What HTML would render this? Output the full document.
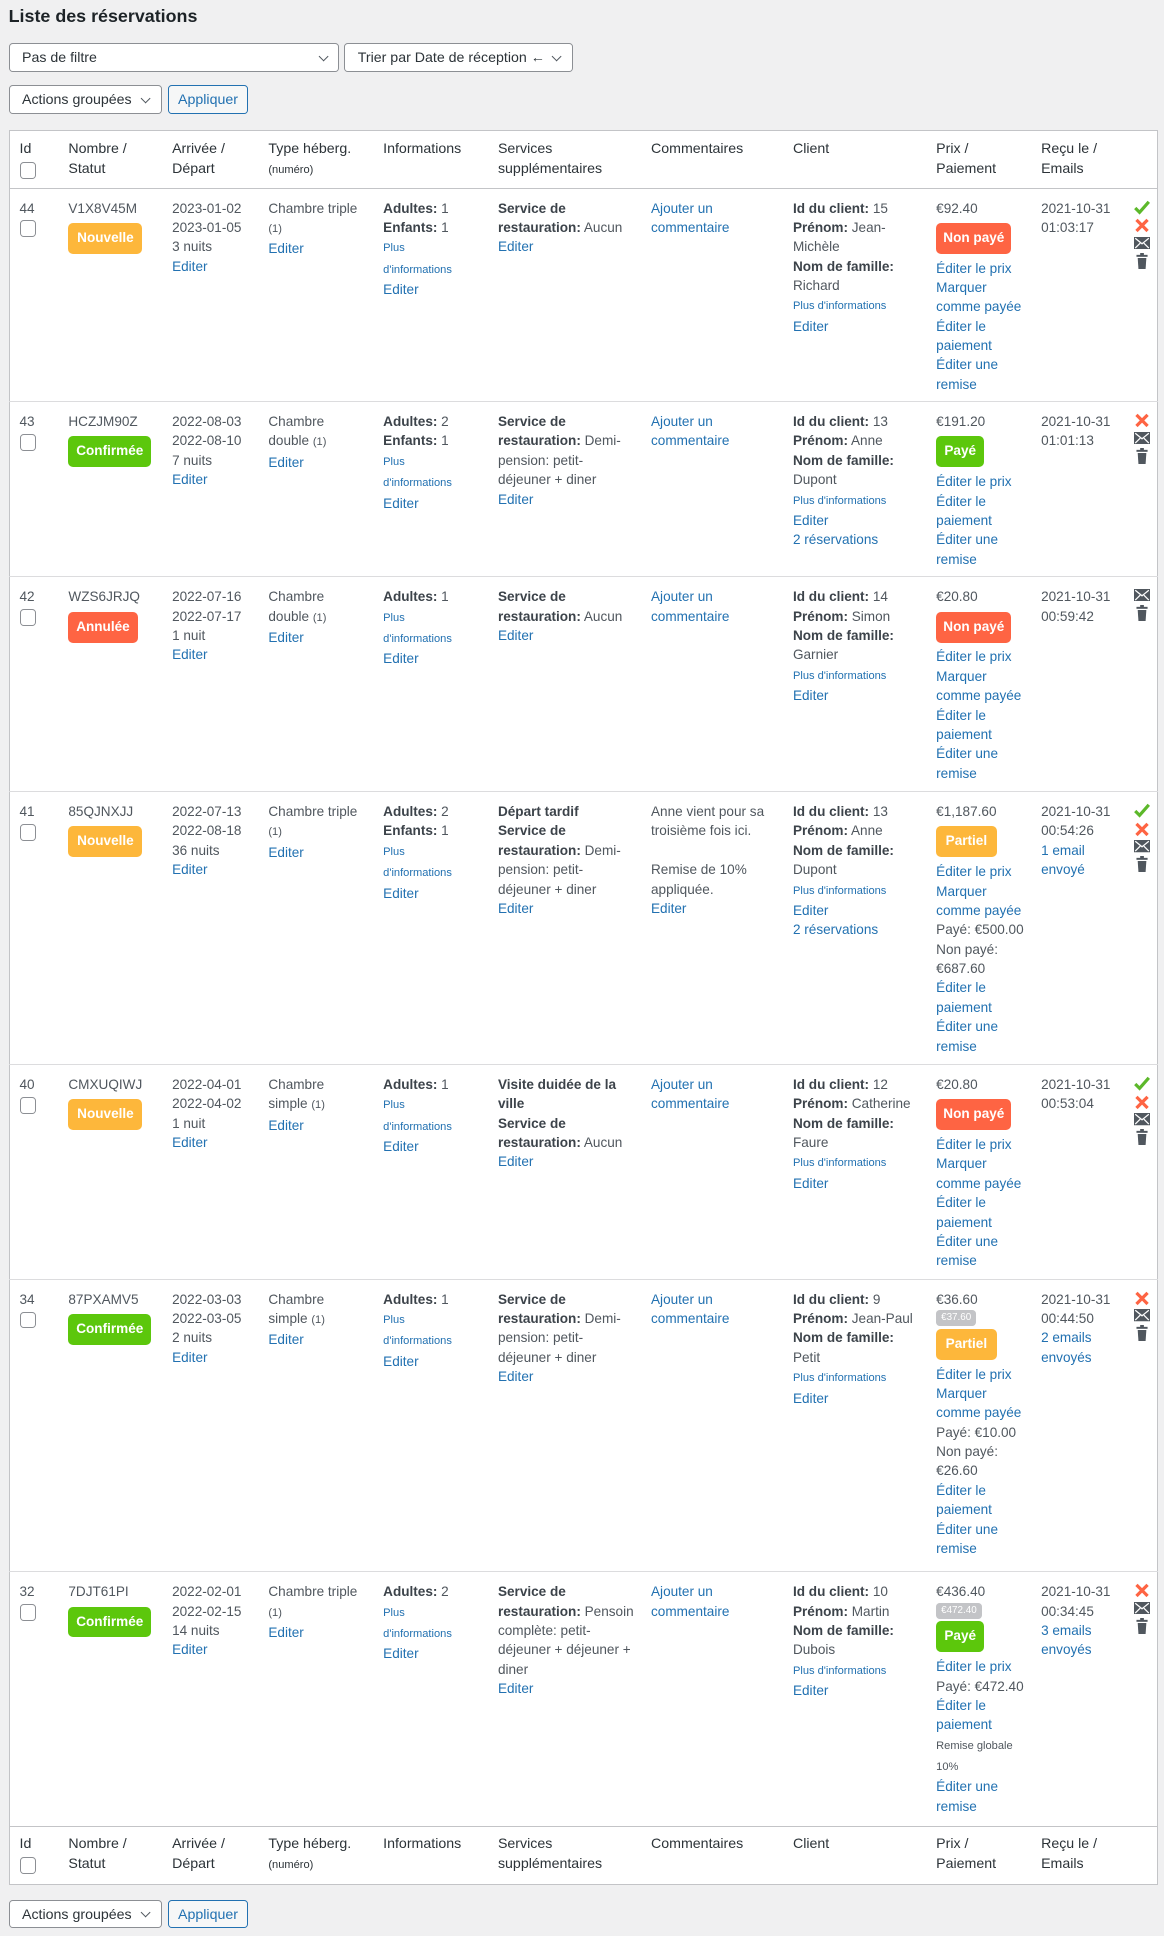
<!DOCTYPE html>
<html><head><meta charset="utf-8">
<style>
html,body{margin:0;padding:0;background:#f0f0f1;}
body{width:1164px;height:1936px;overflow:hidden;}
#w{zoom:1.2344;width:943px;position:relative;font-family:"Liberation Sans",sans-serif;color:#50575e;font-size:11px;}
h1{position:absolute;left:7px;top:5px;margin:0;font-size:14.5px;font-weight:bold;color:#1d2327;}
.sel{position:absolute;height:23px;border:1px solid #8c8f94;border-radius:3px;background:#fff;box-sizing:border-box;font-size:11.5px;color:#2c3338;line-height:23px;padding-left:10px;}
.sel:after{content:"";position:absolute;right:9px;top:7px;width:5px;height:5px;border-right:1.3px solid #50575e;border-bottom:1.3px solid #50575e;transform:rotate(45deg);}
.btn{position:absolute;height:23px;border:1px solid #2271b1;border-radius:3px;background:#f6f7f7;box-sizing:border-box;color:#2271b1;font-size:11.5px;line-height:23px;text-align:center;}
table{position:absolute;left:7px;top:105px;width:930px;border-collapse:collapse;background:#fff;border:1px solid #c3c4c7;table-layout:fixed;}
td,th{vertical-align:top;text-align:left;padding:8px 0 0 8px;line-height:15.7px;white-space:nowrap;font-weight:normal;}
th{font-size:11.5px;color:#2c3338;}
thead tr{height:47px;}
thead th{border-bottom:1px solid #c3c4c7;}
tfoot th{border-top:1px solid #c3c4c7;padding-top:7px;}
tbody tr td{border-bottom:1px solid #dcdcde;}
tbody tr:last-child td{border-bottom:none;}
.a{color:#2271b1;}
b{color:#3c434a;}
.s{font-size:9px;}
.cb{display:block;width:12px;height:12px;border:1px solid #8c8f94;border-radius:3px;margin-top:2px;background:#fff;}
.bd{display:block;box-sizing:border-box;height:25px;line-height:25px;border-radius:4px;color:#fff;font-weight:bold;font-size:11px;text-align:center;margin:4px 0 4px;}
.new{background:#fdb73b;width:60px;}
.ok{background:#5cc70c;width:67px;}
.can{background:#fe6443;width:56px;}
.np{background:#fe6443;width:61px;}
.py{background:#5cc70c;width:39px;}
.pt{background:#fdb73b;width:49px;}
.gr{display:block;width:fit-content;background:#c3c4c7;color:#fff;font-size:8px;line-height:13px;padding:0 4px;border-radius:3px;margin:1px 0 2px;}
.gr+.bd{margin-top:2px;}
.ic{padding-left:8px;padding-top:9px;}
.ic svg{display:block;margin-bottom:3px;}
</style></head><body><div id="w">
<h1>Liste des réservations</h1>
<div class="sel" style="left:7px;top:35px;width:268px;">Pas de filtre</div>
<div class="sel" style="left:279px;top:35px;width:185px;">Trier par Date de réception ←</div>
<div class="sel" style="left:7px;top:69px;width:124px;">Actions groupées</div>
<div class="btn" style="left:136px;top:69px;width:65px;">Appliquer</div>

<svg width="0" height="0" style="position:absolute">
<defs>
<symbol id="ck" viewBox="0 0 13 12"><path d="M1 6.5 L4.5 10 L12 1.5" fill="none" stroke="#5cb82a" stroke-width="2.6"/></symbol>
<symbol id="xx" viewBox="0 0 13 12"><path d="M2 1.5 L11 10.5 M11 1.5 L2 10.5" fill="none" stroke="#fe6443" stroke-width="2.6"/></symbol>
<symbol id="en" viewBox="0 0 13 10"><rect x="0" y="0" width="13" height="10" fill="#50575e"/><path d="M1 1 L6.5 5.5 L12 1 M1 9 L5 5 M12 9 L8 5" fill="none" stroke="#fff" stroke-width="1"/></symbol>
<symbol id="tr" viewBox="0 0 13 13"><rect x="2" y="1.5" width="9" height="1.6" fill="#50575e"/><rect x="5" y="0" width="3" height="2" fill="#50575e"/><path d="M3 4 H10 L9.4 13 H3.6 Z" fill="#50575e"/></symbol>
</defs></svg>

<table>
<colgroup><col style="width:40px"><col style="width:84px"><col style="width:78px"><col style="width:93px"><col style="width:93px"><col style="width:124px"><col style="width:115px"><col style="width:116px"><col style="width:85px"><col style="width:75px"><col style="width:27px"></colgroup>
<thead><tr><th>Id<span class="cb"></span></th><th>Nombre /<br>Statut</th><th>Arrivée /<br>Départ</th><th>Type héberg.<br><span class="s">(numéro)</span></th><th>Informations</th><th>Services<br>supplémentaires</th><th>Commentaires</th><th>Client</th><th>Prix /<br>Paiement</th><th>Reçu le /<br>Emails</th><th></th></tr></thead>
<tbody>
<tr style="height:173px">
<td>44<span class="cb"></span></td>
<td>V1X8V45M<span class="bd new">Nouvelle</span></td>
<td>2023-01-02<br>2023-01-05<br>3 nuits<br><span class="a">Editer</span></td>
<td>Chambre triple<br><span class="s">(1)</span><br><span class="a">Editer</span></td>
<td><b>Adultes:</b> 1<br><b>Enfants:</b> 1<br><span class="a s">Plus<br>d'informations</span><br><span class="a">Editer</span></td>
<td><b>Service de<br>restauration:</b> Aucun<br><span class="a">Editer</span></td>
<td class="a">Ajouter un<br>commentaire</td>
<td><b>Id du client:</b> 15<br><b>Prénom:</b> Jean-<br>Michèle<br><b>Nom de famille:</b><br>Richard<br><span class="a s">Plus d'informations</span><br><span class="a">Editer</span></td>
<td>€92.40<span class="bd np">Non payé</span><span class="a">Éditer le prix<br>Marquer<br>comme payée<br>Éditer le<br>paiement<br>Éditer une<br>remise</span></td>
<td>2021-10-31<br>01:03:17</td>
<td class="ic"><svg width="13" height="12"><use href="#ck"/></svg><svg width="13" height="12"><use href="#xx"/></svg><svg width="13" height="10"><use href="#en"/></svg><svg width="13" height="13"><use href="#tr"/></svg></td>
</tr>
<tr style="height:142px">
<td>43<span class="cb"></span></td>
<td>HCZJM90Z<span class="bd ok">Confirmée</span></td>
<td>2022-08-03<br>2022-08-10<br>7 nuits<br><span class="a">Editer</span></td>
<td>Chambre<br>double <span class="s">(1)</span><br><span class="a">Editer</span></td>
<td><b>Adultes:</b> 2<br><b>Enfants:</b> 1<br><span class="a s">Plus<br>d'informations</span><br><span class="a">Editer</span></td>
<td><b>Service de<br>restauration:</b> Demi-<br>pension: petit-<br>déjeuner + diner<br><span class="a">Editer</span></td>
<td class="a">Ajouter un<br>commentaire</td>
<td><b>Id du client:</b> 13<br><b>Prénom:</b> Anne<br><b>Nom de famille:</b><br>Dupont<br><span class="a s">Plus d'informations</span><br><span class="a">Editer<br>2 réservations</span></td>
<td>€191.20<span class="bd py">Payé</span><span class="a">Éditer le prix<br>Éditer le<br>paiement<br>Éditer une<br>remise</span></td>
<td>2021-10-31<br>01:01:13</td>
<td class="ic"><svg width="13" height="12"><use href="#xx"/></svg><svg width="13" height="10"><use href="#en"/></svg><svg width="13" height="13"><use href="#tr"/></svg></td>
</tr>
<tr style="height:174px">
<td>42<span class="cb"></span></td>
<td>WZS6JRJQ<span class="bd can">Annulée</span></td>
<td>2022-07-16<br>2022-07-17<br>1 nuit<br><span class="a">Editer</span></td>
<td>Chambre<br>double <span class="s">(1)</span><br><span class="a">Editer</span></td>
<td><b>Adultes:</b> 1<br><span class="a s">Plus<br>d'informations</span><br><span class="a">Editer</span></td>
<td><b>Service de<br>restauration:</b> Aucun<br><span class="a">Editer</span></td>
<td class="a">Ajouter un<br>commentaire</td>
<td><b>Id du client:</b> 14<br><b>Prénom:</b> Simon<br><b>Nom de famille:</b><br>Garnier<br><span class="a s">Plus d'informations</span><br><span class="a">Editer</span></td>
<td>€20.80<span class="bd np">Non payé</span><span class="a">Éditer le prix<br>Marquer<br>comme payée<br>Éditer le<br>paiement<br>Éditer une<br>remise</span></td>
<td>2021-10-31<br>00:59:42</td>
<td class="ic"><svg width="13" height="10"><use href="#en"/></svg><svg width="13" height="13"><use href="#tr"/></svg></td>
</tr>
<tr style="height:221px">
<td>41<span class="cb"></span></td>
<td>85QJNXJJ<span class="bd new">Nouvelle</span></td>
<td>2022-07-13<br>2022-08-18<br>36 nuits<br><span class="a">Editer</span></td>
<td>Chambre triple<br><span class="s">(1)</span><br><span class="a">Editer</span></td>
<td><b>Adultes:</b> 2<br><b>Enfants:</b> 1<br><span class="a s">Plus<br>d'informations</span><br><span class="a">Editer</span></td>
<td><b>Départ tardif<br>Service de<br>restauration:</b> Demi-<br>pension: petit-<br>déjeuner + diner<br><span class="a">Editer</span></td>
<td>Anne vient pour sa<br>troisième fois ici.<br><br>Remise de 10%<br>appliquée.<br><span class="a">Editer</span></td>
<td><b>Id du client:</b> 13<br><b>Prénom:</b> Anne<br><b>Nom de famille:</b><br>Dupont<br><span class="a s">Plus d'informations</span><br><span class="a">Editer<br>2 réservations</span></td>
<td>€1,187.60<span class="bd pt">Partiel</span><span class="a">Éditer le prix<br>Marquer<br>comme payée</span><br>Payé: €500.00<br>Non payé:<br>€687.60<br><span class="a">Éditer le<br>paiement<br>Éditer une<br>remise</span></td>
<td>2021-10-31<br>00:54:26<br><span class="a">1 email<br>envoyé</span></td>
<td class="ic"><svg width="13" height="12"><use href="#ck"/></svg><svg width="13" height="12"><use href="#xx"/></svg><svg width="13" height="10"><use href="#en"/></svg><svg width="13" height="13"><use href="#tr"/></svg></td>
</tr>
<tr style="height:174px">
<td>40<span class="cb"></span></td>
<td>CMXUQIWJ<span class="bd new">Nouvelle</span></td>
<td>2022-04-01<br>2022-04-02<br>1 nuit<br><span class="a">Editer</span></td>
<td>Chambre<br>simple <span class="s">(1)</span><br><span class="a">Editer</span></td>
<td><b>Adultes:</b> 1<br><span class="a s">Plus<br>d'informations</span><br><span class="a">Editer</span></td>
<td><b>Visite duidée de la<br>ville<br>Service de<br>restauration:</b> Aucun<br><span class="a">Editer</span></td>
<td class="a">Ajouter un<br>commentaire</td>
<td><b>Id du client:</b> 12<br><b>Prénom:</b> Catherine<br><b>Nom de famille:</b><br>Faure<br><span class="a s">Plus d'informations</span><br><span class="a">Editer</span></td>
<td>€20.80<span class="bd np">Non payé</span><span class="a">Éditer le prix<br>Marquer<br>comme payée<br>Éditer le<br>paiement<br>Éditer une<br>remise</span></td>
<td>2021-10-31<br>00:53:04</td>
<td class="ic"><svg width="13" height="12"><use href="#ck"/></svg><svg width="13" height="12"><use href="#xx"/></svg><svg width="13" height="10"><use href="#en"/></svg><svg width="13" height="13"><use href="#tr"/></svg></td>
</tr>
<tr style="height:237px">
<td>34<span class="cb"></span></td>
<td>87PXAMV5<span class="bd ok">Confirmée</span></td>
<td>2022-03-03<br>2022-03-05<br>2 nuits<br><span class="a">Editer</span></td>
<td>Chambre<br>simple <span class="s">(1)</span><br><span class="a">Editer</span></td>
<td><b>Adultes:</b> 1<br><span class="a s">Plus<br>d'informations</span><br><span class="a">Editer</span></td>
<td><b>Service de<br>restauration:</b> Demi-<br>pension: petit-<br>déjeuner + diner<br><span class="a">Editer</span></td>
<td class="a">Ajouter un<br>commentaire</td>
<td><b>Id du client:</b> 9<br><b>Prénom:</b> Jean-Paul<br><b>Nom de famille:</b><br>Petit<br><span class="a s">Plus d'informations</span><br><span class="a">Editer</span></td>
<td>€36.60<span class="gr">€37.60</span><span class="bd pt">Partiel</span><span class="a">Éditer le prix<br>Marquer<br>comme payée</span><br>Payé: €10.00<br>Non payé:<br>€26.60<br><span class="a">Éditer le<br>paiement<br>Éditer une<br>remise</span></td>
<td>2021-10-31<br>00:44:50<br><span class="a">2 emails<br>envoyés</span></td>
<td class="ic"><svg width="13" height="12"><use href="#xx"/></svg><svg width="13" height="10"><use href="#en"/></svg><svg width="13" height="13"><use href="#tr"/></svg></td>
</tr>
<tr style="height:206px">
<td>32<span class="cb"></span></td>
<td>7DJT61PI<span class="bd ok">Confirmée</span></td>
<td>2022-02-01<br>2022-02-15<br>14 nuits<br><span class="a">Editer</span></td>
<td>Chambre triple<br><span class="s">(1)</span><br><span class="a">Editer</span></td>
<td><b>Adultes:</b> 2<br><span class="a s">Plus<br>d'informations</span><br><span class="a">Editer</span></td>
<td><b>Service de<br>restauration:</b> Pensoin<br>complète: petit-<br>déjeuner + déjeuner +<br>diner<br><span class="a">Editer</span></td>
<td class="a">Ajouter un<br>commentaire</td>
<td><b>Id du client:</b> 10<br><b>Prénom:</b> Martin<br><b>Nom de famille:</b><br>Dubois<br><span class="a s">Plus d'informations</span><br><span class="a">Editer</span></td>
<td>€436.40<span class="gr">€472.40</span><span class="bd py">Payé</span><span class="a">Éditer le prix</span><br>Payé: €472.40<br><span class="a">Éditer le<br>paiement</span><br><span class="s">Remise globale<br>10%</span><br><span class="a">Éditer une<br>remise</span></td>
<td>2021-10-31<br>00:34:45<br><span class="a">3 emails<br>envoyés</span></td>
<td class="ic"><svg width="13" height="12"><use href="#xx"/></svg><svg width="13" height="10"><use href="#en"/></svg><svg width="13" height="13"><use href="#tr"/></svg></td>
</tr>
</tbody>
<tfoot><tr style="height:47px"><th>Id<span class="cb"></span></th><th>Nombre /<br>Statut</th><th>Arrivée /<br>Départ</th><th>Type héberg.<br><span class="s">(numéro)</span></th><th>Informations</th><th>Services<br>supplémentaires</th><th>Commentaires</th><th>Client</th><th>Prix /<br>Paiement</th><th>Reçu le /<br>Emails</th><th></th></tr></tfoot>
</table>
<div class="sel" style="left:7px;top:1539px;width:124px;">Actions groupées</div>
<div class="btn" style="left:136px;top:1539px;width:65px;">Appliquer</div>
</div></body></html>
